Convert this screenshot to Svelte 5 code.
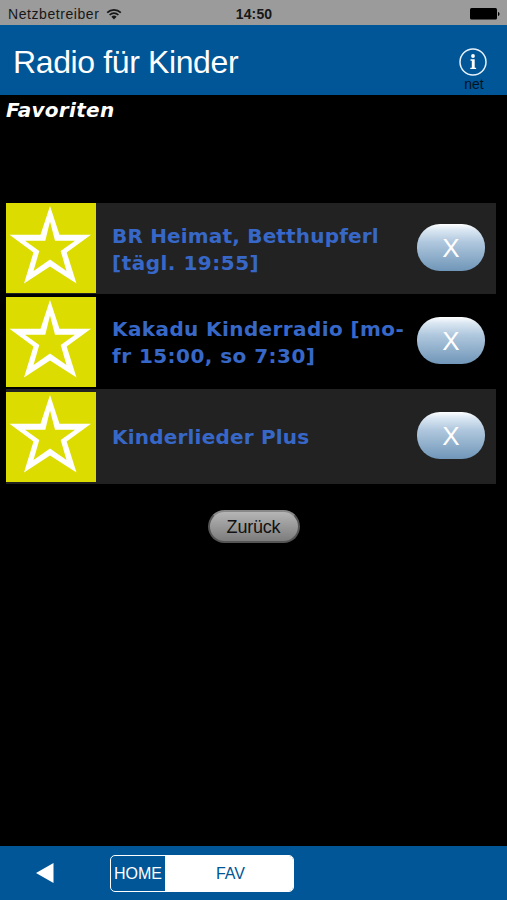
<script lang="ts">
	type Line = { text: string; tracking: number };
	type Station = { id: number; lines: Line[] };

	let stations: Station[] = [
		{
			id: 1,
			lines: [
				{ text: 'BR Heimat, Betthupferl', tracking: 0.18 },
				{ text: '[tägl. 19:55]', tracking: 0.5 }
			]
		},
		{
			id: 2,
			lines: [
				{ text: 'Kakadu Kinderradio [mo-', tracking: 0.4 },
				{ text: 'fr 15:00, so 7:30]', tracking: 0.45 }
			]
		},
		{ id: 3, lines: [{ text: 'Kinderlieder Plus', tracking: 0.2 }] }
	];

	function remove(id: number) {
		stations = stations.filter((station) => station.id !== id);
	}
</script>

<div class="screen">
	<div class="status">
		<div class="carrier">
			<span>Netzbetreiber</span>
			<svg width="16" height="12" viewBox="0 0 16 12">
				<path d="M1.2 4.6a9.6 9.6 0 0 1 13.6 0M3.6 7a6.2 6.2 0 0 1 8.8 0" />
				<path class="dot" d="M8 11.4 5.4 8.8a3.7 3.7 0 0 1 5.2 0z" />
			</svg>
		</div>
		<span class="time">14:50</span>
		<div class="power">
			<svg width="30" height="12" viewBox="0 0 30 12">
				<rect x="0" y="0" width="27" height="11.5" rx="1.5" />
				<path d="M28 4c2 .3 2 3.700 0 4z" />
			</svg>
		</div>
	</div>

	<header>
		<h1>Radio für Kinder</h1>
		<button class="info" aria-label="Info">
			<svg width="28" height="28" viewBox="0 0 28 28">
				<circle class="ring" cx="14" cy="14" r="13" />
				<circle cx="14" cy="8" r="1.900" />
				<path d="M11.500 11.300h4.200v8.500h1.400v1.300h-5.800v-1.300h1.500v-7.100h-1.300z" />
			</svg>
			<span>net</span>
		</button>
	</header>

	<main>
		<h2>Favoriten</h2>
		<ul>
			{#each stations as station (station.id)}
				<li>
					<svg class="star" width="90" height="90" viewBox="0 0 90 90">
						<path
							fill-rule="evenodd"
							d="M44 3 53.500 31.800H85L60.700 49.500 70.500 80.500 44 63.500 18 80.500 27.500 49.500 3.500 31.800H34.500zM44 18.500 39.300 37.700H19L33.300 48 27.500 68 44 56.500 60.500 68 54.700 48 69 37.700H49z"
						/>
					</svg>
					<div class="name">
						{#each station.lines as line}
							<span style="letter-spacing: {line.tracking}px">{line.text}</span>
						{/each}
					</div>
					<button class="delete" on:click={() => remove(station.id)}>X</button>
				</li>
			{/each}
		</ul>
		<button class="back">Zurück</button>
	</main>

	<footer>
		<button class="arrow" aria-label="Zurück">
			<svg width="18" height="20" viewBox="0 0 18 20">
				<path d="M0 10 17.500 0v20z" />
			</svg>
		</button>
		<div class="tabs">
			<button class="home">HOME</button>
			<button class="fav">FAV</button>
		</div>
	</footer>
</div>

<style>
	:global(body) {
		margin: 0;
		background: #000;
	}
	.screen {
		display: flex;
		flex-direction: column;
		width: 507px;
		height: 900px;
		overflow: hidden;
		background: #000;
		font-family: 'Liberation Sans', Arial, sans-serif;
	}
	button {
		margin: 0;
		padding: 0;
		border: none;
		background: none;
		font-family: inherit;
	}
	svg {
		display: block;
		flex: none;
	}
	.status {
		display: grid;
		grid-template-columns: 1fr auto 1fr;
		align-items: center;
		height: 25px;
		padding: 2px 7px 0 8px;
		box-sizing: border-box;
		background: #9b9b9b;
		color: #171717;
		font-size: 14px;
		line-height: 22px;
	}
	.carrier {
		display: flex;
		align-items: center;
		gap: 7px;
		letter-spacing: 0.57px;
	}
	.carrier path {
		fill: none;
		stroke: #171717;
		stroke-width: 1.7;
	}
	.carrier .dot {
		fill: #171717;
		stroke: none;
	}
	.time {
		font-weight: bold;
		letter-spacing: 0.1px;
	}
	.power {
		display: flex;
		justify-content: flex-end;
	}
	header {
		display: flex;
		justify-content: space-between;
		height: 70px;
		padding: 0 20px 0 13px;
		box-sizing: border-box;
		background: #005696;
	}
	h1 {
		margin: 18px 0 0;
		color: #fff;
		font-size: 32px;
		font-weight: normal;
		line-height: 38px;
		letter-spacing: -0.38px;
	}
	.info {
		display: flex;
		flex-direction: column;
		align-items: center;
		margin-top: 23px;
		height: 45px;
		color: #001222;
		font-size: 14px;
		line-height: 17px;
	}
	.info span {
		padding-left: 2px;
	}
	.info svg {
		fill: #fff;
	}
	.info .ring {
		fill: none;
		stroke: #e6f1fa;
		stroke-width: 1.5;
	}
	main {
		display: flex;
		flex: 1;
		flex-direction: column;
		align-items: center;
	}
	h2 {
		align-self: flex-start;
		height: 107.5px;
		margin: 0 0 0 6px;
		padding-top: 2px;
		box-sizing: border-box;
		color: #fff;
		font: italic bold 20px/26px 'DejaVu Sans', Verdana, sans-serif;
		letter-spacing: 0.3px;
	}
	ul {
		align-self: flex-start;
		width: 490px;
		margin: 0 0 0 6px;
		padding: 0;
		list-style: none;
	}
	li {
		display: flex;
		align-items: center;
		height: 95px;
		padding: 0 11px 2px 0;
		box-sizing: border-box;
	}
	li:first-child {
		height: 91.5px;
		padding-bottom: 1px;
	}
	li:nth-child(odd) {
		background: #222;
	}
	.star {
		background: #dcdc00;
		fill: #fff;
	}
	li:not(:first-child) .star {
		margin-top: 3px;
	}
	.name {
		display: flex;
		flex: 1;
		flex-direction: column;
		padding: 4px 0 0 16px;
		color: #3768c8;
		font: bold 20px/27px 'DejaVu Sans', Verdana, sans-serif;
		white-space: nowrap;
	}
	.delete {
		width: 68px;
		height: 47px;
		border-radius: 23px;
		background: linear-gradient(#fff 0, #dce8f3 12%, #b0c8de 38%, #7096b8 100%);
		color: #fff;
		font-size: 26px;
		line-height: 49px;
	}
	.back {
		width: 92px;
		height: 33px;
		margin-top: 26px;
		border: 2px solid #555;
		border-top-color: #888;
		border-radius: 17px;
		background: linear-gradient(#b5b5b5, #7c7c7c);
		color: #111;
		font-size: 18px;
		line-height: 31px;
		letter-spacing: -0.2px;
	}
	footer {
		display: flex;
		align-items: center;
		height: 54px;
		padding-left: 36px;
		background: #005696;
	}
	.arrow svg {
		fill: #fff;
	}
	.tabs {
		display: flex;
		width: 184px;
		height: 37px;
		margin-left: 56px;
		border: 1.5px solid #fff;
		border-radius: 5px;
		box-sizing: border-box;
		overflow: hidden;
	}
	.tabs button {
		font-size: 16px;
		line-height: 36px;
	}
	.home {
		width: 54px;
		color: #fff;
	}
	.tabs .fav {
		flex: 1;
		padding-left: 3px;
		background: #fff;
		color: #005696;
	}
</style>
